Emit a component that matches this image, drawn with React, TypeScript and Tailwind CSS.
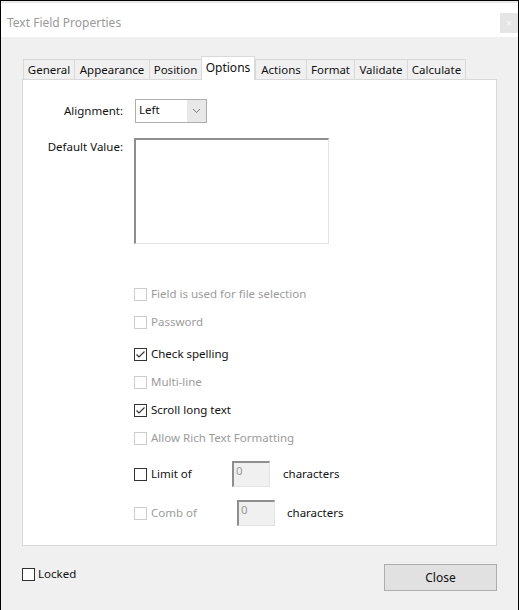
import React from "react";

const TABS: { label: string; w: string; active?: boolean }[] = [
  { label: "General", w: "w-[51px]" },
  { label: "Appearance", w: "w-[75px]" },
  { label: "Position", w: "w-[52px]" },
  { label: "Options", w: "w-[54px]", active: true },
  { label: "Actions", w: "w-[51px]" },
  { label: "Format", w: "w-[48px]" },
  { label: "Validate", w: "w-[53px]" },
  { label: "Calculate", w: "w-[59px]" },
];

function Check({ checked = false, disabled = false }: { checked?: boolean; disabled?: boolean }) {
  return (
    <span
      className={`flex h-[13px] w-[13px] shrink-0 items-center justify-center border bg-white ${
        disabled ? "border-[#cccccc]" : "border-[#333333]"
      }`}
    >
      {checked && (
        <svg width="11" height="11" viewBox="0 0 11 11">
          <polyline points="1.5,5.5 4,8 9.5,2.5" fill="none" stroke="#333333" strokeWidth="1.2" />
        </svg>
      )}
    </span>
  );
}

function Option({
  label,
  checked,
  disabled,
  className = "",
}: {
  label: string;
  checked?: boolean;
  disabled?: boolean;
  className?: string;
}) {
  return (
    <div className={`flex h-[20px] items-center gap-[4px] ${className}`}>
      <Check checked={checked} disabled={disabled} />
      <span className={disabled ? "text-[#9b9b9b]" : "text-[#111]"}>{label}</span>
    </div>
  );
}

function NumberBox() {
  return (
    <div className="h-[26px] w-[38px] border-l-2 border-t-2 border-b border-r border-l-[#8e8e8e] border-t-[#8e8e8e] border-b-[#e3e3e3] border-r-[#e3e3e3] bg-[#f0f0f0] pl-[2px] text-[#9b9b9b] leading-[16px]">
      0
    </div>
  );
}

export default function App() {
  return (
    <div className="flex h-[610px] w-[519px] flex-col overflow-hidden border-x border-t border-black bg-[#f0f0f0] font-['Noto_Sans',sans-serif] text-[11.5px] text-[#111]">
      {/* title bar */}
      <div className="flex h-[36px] items-end justify-between border-t-2 border-[#e8e8e8] bg-white pb-[4px]">
        <span className="pl-[6px] text-[12px] leading-[20px] text-[#9a9a9a]">Text Field Properties</span>
        <span className="flex h-[20px] w-[18px] items-center justify-center bg-[#e5e5e5] text-[10px] leading-none text-[#fafafa]">
          ×
        </span>
      </div>

      <div className="flex flex-col px-[21px]">
        {/* tabs */}
        <div className="mt-[19px] flex h-[23px] items-end pl-[1px]">
          {TABS.map((t, i) =>
            t.active ? (
              <div
                key={t.label}
                className={`relative z-10 -mb-px flex h-[24px] ${t.w} items-start justify-center border border-b-0 border-[#d9d9d9] bg-white pt-[2px] text-[12px]`}
              >
                {t.label}
              </div>
            ) : (
              <div
                key={t.label}
                className={`flex h-[20px] ${t.w} items-center justify-center border-l border-t border-[#d9d9d9] bg-[#f0f0f0] ${
                  i === TABS.length - 1 ? "border-r" : ""
                }`}
              >
                {t.label}
              </div>
            )
          )}
        </div>

        {/* panel */}
        <div className="flex h-[467px] w-[475px] flex-col border border-[#d9d9d9] bg-white">
          <div className="mt-[19px] flex items-center">
            <span className="w-[100px] text-right">Alignment:</span>
            <div className="ml-[12px] flex h-[24px] w-[72px] border border-[#adadad] bg-white">
              <span className="flex-1 pl-[3px] leading-[20px]">Left</span>
              <span className="flex w-[19px] items-center justify-center bg-[#e8e8e8]">
                <svg width="9" height="6" viewBox="0 0 9 6">
                  <polyline points="1,1 4.5,4.5 8,1" fill="none" stroke="#7a7a7a" strokeWidth="1" />
                </svg>
              </span>
            </div>
          </div>

          <div className="mt-[15px] flex items-start">
            <span className="w-[100px] pt-[1px] text-right leading-[16px]">Default Value:</span>
            <div className="ml-[11px] h-[106px] w-[195px] border-l-2 border-t-2 border-b border-r border-l-[#8e8e8e] border-t-[#8e8e8e] border-b-[#e3e3e3] border-r-[#e3e3e3] bg-white" />
          </div>

          <div className="flex flex-col pl-[111px]">
            <Option className="mt-[40px]" label="Field is used for file selection" disabled />
            <Option className="mt-[8px]" label="Password" disabled />
            <Option className="mt-[12px]" label="Check spelling" checked />
            <Option className="mt-[8px]" label="Multi-line" disabled />
            <Option className="mt-[8px]" label="Scroll long text" checked />
            <Option className="mt-[8px]" label="Allow Rich Text Formatting" disabled />

            <div className="mt-[13px] flex h-[26px] items-center">
              <Check />
              <span className="ml-[4px] w-[81px]">Limit of</span>
              <NumberBox />
              <span className="ml-[13px]">characters</span>
            </div>

            <div className="mt-[13px] flex h-[26px] items-center">
              <Check disabled />
              <span className="ml-[4px] w-[86px] text-[#9b9b9b]">Comb of</span>
              <NumberBox />
              <span className="ml-[12px]">characters</span>
            </div>
          </div>
        </div>

        {/* footer */}
        <div className="mt-[18px] flex items-start justify-between">
          <div className="mt-[3px] flex items-center gap-[3px]">
            <Check />
            <span className="leading-[14px]">Locked</span>
          </div>
          <button className="h-[27px] w-[113px] border border-[#adadad] bg-[#e1e1e1] text-[12px] text-[#111]">
            Close
          </button>
        </div>
      </div>
    </div>
  );
}
